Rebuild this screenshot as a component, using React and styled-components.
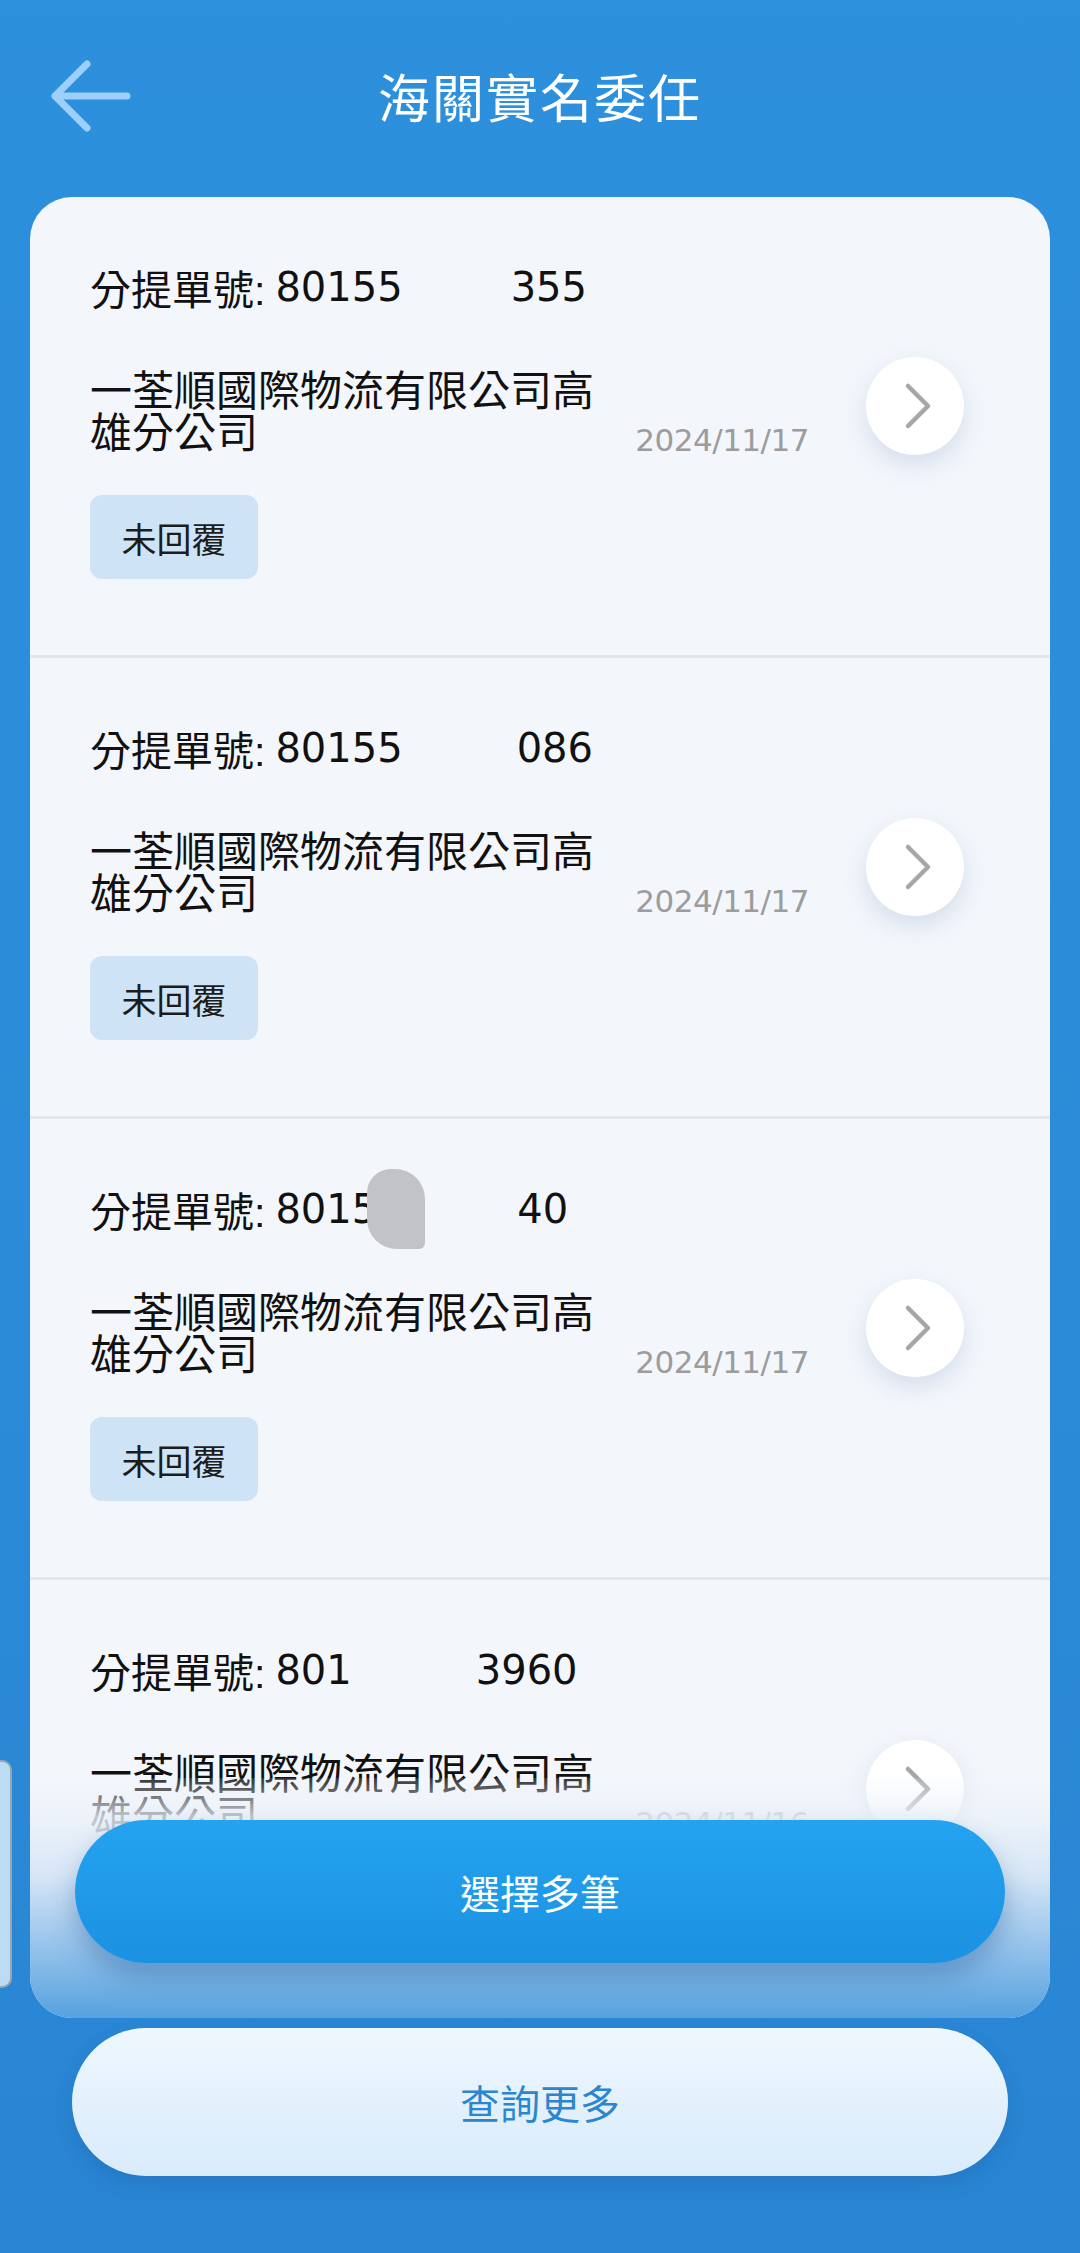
import React from "react";
import styled, { createGlobalStyle } from "styled-components";

const GlobalStyle = createGlobalStyle`
  html, body {
    margin: 0;
    padding: 0;
  }
  body {
    font-family: "Liberation Sans", "Noto Sans CJK TC", sans-serif;
    background: #2b8ad7;
  }
  * {
    box-sizing: border-box;
  }
`;

const Page = styled.div`
  position: relative;
  width: 1080px;
  min-height: 2253px;
  background: linear-gradient(180deg, #2d90dc 0%, #2b8bd8 60%, #2985d3 100%);
  display: flex;
  flex-direction: column;
  overflow: hidden;
`;

const Header = styled.header`
  height: 197px;
  display: grid;
  grid-template-columns: 1fr auto 1fr;
  align-items: center;
  padding: 0 50px 6px;
`;

const BackButton = styled.button`
  justify-self: start;
  width: 84px;
  height: 76px;
  padding: 0;
  border: none;
  background: none;
  display: flex;
  align-items: center;
`;

const Title = styled.h1`
  margin: 0;
  font-family: "Noto Sans CJK TC", sans-serif;
  font-size: 52px;
  font-weight: 400;
  letter-spacing: 2px;
  color: #ffffff;
`;

const Card = styled.main`
  position: relative;
  margin: 0 30px;
  height: 1821px;
  border-radius: 42px;
  background: #f3f6fb;
  overflow: hidden;
`;

const Item = styled.section`
  height: 461px;
  padding: 65px 86px 0 60px;
  border-bottom: 3px solid #e3e6eb;
  display: flex;
  flex-direction: column;
`;

const BillNo = styled.div`
  display: flex;
  align-items: center;
  height: 50px;
  font-size: 41px;
  color: #111111;
  white-space: nowrap;
`;

const Num = styled.span`
  display: inline-flex;
  align-items: center;
  height: 50px;
  margin-left: 10px;
  font-family: "DejaVu Sans", sans-serif;
  font-size: 40px;
`;

const Gap = styled.span`
  display: inline-block;
  width: ${(p) => p.$w}px;
`;

const Smudge = styled.span`
  flex-shrink: 0;
  width: 58px;
  height: 80px;
  margin: -15px -6px -15px -10px;
  border-radius: 24px 30px 6px 30px;
  background: #c2c3c7;
`;

const Middle = styled.div`
  margin-top: 39px;
  display: flex;
  align-items: flex-end;
`;

const Company = styled.div`
  flex: 0 0 512px;
  font-size: 42px;
  line-height: 42px;
  color: #111111;
`;

const DateText = styled.div`
  margin-left: auto;
  margin-right: 57px;
  font-family: "DejaVu Sans", sans-serif;
  font-size: 31px;
  line-height: 30px;
  letter-spacing: -0.5px;
  color: #9c9c9c;
`;

const GoButton = styled.button`
  align-self: center;
  flex-shrink: 0;
  width: 98px;
  height: 98px;
  margin-top: 6px;
  padding: 0;
  border: none;
  border-radius: 50%;
  background: #ffffff;
  box-shadow: 0 10px 22px rgba(140, 165, 200, 0.28);
  display: flex;
  align-items: center;
  justify-content: center;
`;

const Badge = styled.span`
  margin-top: 40px;
  width: 168px;
  height: 84px;
  border-radius: 12px;
  background: #cfe3f6;
  display: flex;
  align-items: center;
  justify-content: center;
  font-family: "Noto Sans CJK TC", sans-serif;
  font-size: 35px;
  color: #1c1c1c;
`;

const Fade = styled.div`
  position: absolute;
  left: 0;
  right: 0;
  bottom: 0;
  height: 240px;
  pointer-events: none;
  background: linear-gradient(
    180deg,
    rgba(243, 246, 251, 0.15) 0%,
    rgba(236, 242, 250, 0.8) 16%,
    rgba(214, 230, 246, 0.95) 40%,
    rgba(150, 195, 235, 1) 70%,
    rgba(86, 162, 224, 1) 100%
  );
`;

const SelectButton = styled.button`
  position: absolute;
  left: 45px;
  right: 45px;
  bottom: 55px;
  height: 143px;
  border: none;
  border-radius: 72px;
  background: linear-gradient(180deg, #24a3f0 0%, #1b91e1 100%);
  box-shadow: 0 14px 26px rgba(25, 80, 140, 0.35);
  font-family: "Noto Sans CJK TC", sans-serif;
  font-size: 40px;
  color: #ffffff;
`;

const MoreButton = styled.button`
  margin: 10px 72px 0;
  height: 148px;
  border: none;
  border-radius: 74px;
  background: linear-gradient(180deg, #eef7fe 0%, #d9ebfb 100%);
  box-shadow: 0 8px 18px rgba(20, 70, 130, 0.2);
  font-family: "Noto Sans CJK TC", sans-serif;
  font-size: 40px;
  color: #2b86cf;
`;

const SideTab = styled.div`
  position: absolute;
  left: -12px;
  top: 1760px;
  width: 24px;
  height: 228px;
  border: 2px solid #98a6b2;
  border-radius: 10px;
  background: #bcdcf4;
`;

const BackArrow = () => (
  <svg width="84" height="76" viewBox="0 0 84 76" fill="none">
    <path
      d="M77 38 H5 M37 6 L5 38 L37 70"
      stroke="#9ccffa"
      strokeWidth="7"
      strokeLinecap="round"
      strokeLinejoin="round"
    />
  </svg>
);

const Chevron = () => (
  <svg width="40" height="48" viewBox="0 0 40 48" fill="none">
    <path
      d="M13 4 L33 24 L13 44"
      stroke="#a6a6a6"
      strokeWidth="4.5"
      strokeLinecap="round"
      strokeLinejoin="round"
    />
  </svg>
);

const items = [
  { head: "80155", gap: 108, tail: "355", date: "2024/11/17" },
  { head: "80155", gap: 114, tail: "086", date: "2024/11/17" },
  { head: "8015", smudge: true, gap: 98, tail: "40", date: "2024/11/17" },
  { head: "801", gap: 124, tail: "3960", date: "2024/11/16" },
];

export default function App() {
  return (
    <>
      <GlobalStyle />
      <Page>
        <Header>
          <BackButton aria-label="back">
            <BackArrow />
          </BackButton>
          <Title>海關實名委任</Title>
          <span />
        </Header>

        <Card>
          {items.map((it, i) => (
            <Item key={i}>
              <BillNo>
                分提單號:
                <Num>
                  {it.head}
                  {it.smudge && <Smudge />}
                  <Gap $w={it.gap} />
                  {it.tail}
                </Num>
              </BillNo>
              <Middle>
                <Company>一荃順國際物流有限公司高雄分公司</Company>
                <DateText>{it.date}</DateText>
                <GoButton aria-label="detail">
                  <Chevron />
                </GoButton>
              </Middle>
              <Badge>未回覆</Badge>
            </Item>
          ))}
          <Fade />
          <SelectButton>選擇多筆</SelectButton>
        </Card>

        <MoreButton>查詢更多</MoreButton>
        <SideTab />
      </Page>
    </>
  );
}
